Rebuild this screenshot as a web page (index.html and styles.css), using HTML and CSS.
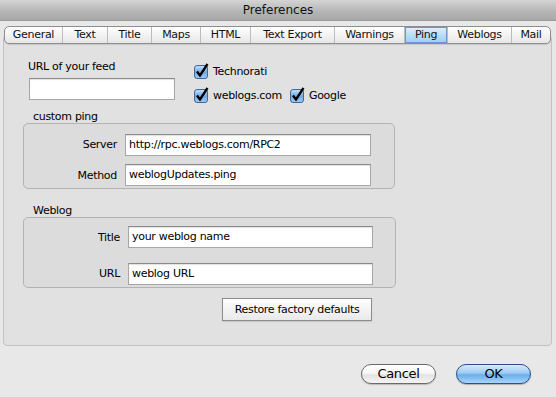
FILE: index.html
```html
<!DOCTYPE html>
<html>
<head>
<meta charset="utf-8">
<link rel="stylesheet" href="styles.css">
</head>
<body>
<div class="window">
  <div class="titlebar">Preferences</div>
  <div class="tabs">
    <div class="tab w-general">General</div>
    <div class="tab w-text">Text</div>
    <div class="tab w-title">Title</div>
    <div class="tab w-maps">Maps</div>
    <div class="tab w-html">HTML</div>
    <div class="tab w-export">Text Export</div>
    <div class="tab w-warn">Warnings</div>
    <div class="tab w-ping selected">Ping</div>
    <div class="tab w-weblogs">Weblogs</div>
    <div class="tab w-mail last">Mail</div>
  </div>
  <div class="panel">
    <div class="top">
      <div class="feed">
        <div class="label">URL of your feed</div>
        <div class="input feed-input"></div>
      </div>
      <div class="checks">
        <div class="check-row">
          <label class="check"><svg class="cb" viewBox="0 0 16 16" width="16" height="16"><defs><linearGradient id="g1" x1="0" y1="0" x2="0" y2="1"><stop offset="0" stop-color="#c9e2fb"/><stop offset="0.5" stop-color="#6fa9e6"/><stop offset="1" stop-color="#9fcaf5"/></linearGradient></defs><rect x="0.5" y="2.5" width="13" height="13" rx="2.5" fill="url(#g1)" stroke="#41679e"/><path d="M3 8.5 L6 12.5 L13.5 1" fill="none" stroke="#000" stroke-width="2.3" stroke-linejoin="miter"/></svg><span>Technorati</span></label>
        </div>
        <div class="check-row">
          <label class="check"><svg class="cb" viewBox="0 0 16 16" width="16" height="16"><rect x="0.5" y="2.5" width="13" height="13" rx="2.5" fill="url(#g1)" stroke="#41679e"/><path d="M3 8.5 L6 12.5 L13.5 1" fill="none" stroke="#000" stroke-width="2.3"/></svg><span>weblogs.com</span></label>
          <label class="check"><svg class="cb" viewBox="0 0 16 16" width="16" height="16"><rect x="0.5" y="2.5" width="13" height="13" rx="2.5" fill="url(#g1)" stroke="#41679e"/><path d="M3 8.5 L6 12.5 L13.5 1" fill="none" stroke="#000" stroke-width="2.3"/></svg><span>Google</span></label>
        </div>
      </div>
    </div>

    <div class="legend first">custom ping</div>
    <div class="group group-ping">
      <div class="lbl">Server</div><div class="input">http://rpc.weblogs.com/RPC2</div>
      <div class="lbl">Method</div><div class="input">weblogUpdates.ping</div>
    </div>

    <div class="legend second">Weblog</div>
    <div class="group group-weblog">
      <div class="lbl">Title</div><div class="input">your weblog name</div>
      <div class="lbl">URL</div><div class="input">weblog URL</div>
    </div>

    <div class="restore">Restore factory defaults</div>
  </div>
  <div class="buttons">
    <div class="pill cancel">Cancel</div>
    <div class="pill ok">OK</div>
  </div>
</div>
</body>
</html>
```

FILE: styles.css
```css
* { box-sizing: border-box; }
html, body { margin: 0; padding: 0; }
body {
  font-family: "DejaVu Sans", sans-serif;
  font-size: 11px;
  letter-spacing: -0.3px;
  color: #000;
  background: #e8e8e8;
}
.window {
  width: 556px;
  height: 397px;
  background: #e8e8e8;
  overflow: hidden;
}
.titlebar {
  height: 21px;
  line-height: 21px;
  text-align: center;
  font-size: 12px;
  letter-spacing: 0;
  color: #111;
  background: linear-gradient(#d4d4d4, #b4b4b4 60%, #a8a8a8);
  border-bottom: 1px solid #9a9a9a;
}
.tabs {
  position: relative;
  z-index: 2;
  display: flex;
  margin: 5px 0 0 4px;
  height: 18px;
  width: 547px;
  border: 1px solid #8e8e8e;
  border-radius: 5px;
  background: linear-gradient(#ffffff, #f3f3f3 50%, #e6e6e6);
  box-shadow: 0 1px 1px rgba(0,0,0,0.12);
  overflow: hidden;
}
.tab {
  height: 16px;
  line-height: 16px;
  text-align: center;
  border-right: 1px solid #bcbcbc;
  color: #111;
}
.tab.last { border-right: none; }
.tab.selected {
  background: linear-gradient(#e2f1fe, #b8dcf9 50%, #9ccef6);
  box-shadow: inset 0 0 0 1px #6f95cc;
}
.w-general { width: 58px; }
.w-text { width: 45px; }
.w-title { width: 44px; }
.w-maps { width: 49px; }
.w-html { width: 50px; }
.w-export { width: 84px; }
.w-warn { width: 70px; }
.w-ping { width: 43px; }
.w-weblogs { width: 64px; }
.w-mail { width: 38px; }

.panel {
  margin: -9px 0 0 3px;
  width: 549px;
  height: 311px;
  background: #e1e1e1;
  border: 1px solid #c2c2c2;
  border-radius: 4px;
  padding: 24px 0 0 0;
}
.top {
  display: flex;
  margin-left: 24px;
  height: 40px;
}
.feed { width: 166px; }
.label { line-height: 14px; height: 14px; }
.input {
  height: 22px;
  background: #fff;
  border: 1px solid #a6a6a6;
  border-top-color: #8a8a8a;
  box-shadow: inset 0 1px 1px rgba(0,0,0,0.12);
  line-height: 20px;
  padding-left: 3px;
  white-space: nowrap;
  overflow: hidden;
}
.feed-input {
  margin: 4px 0 0 1px;
  width: 146px;
}
.checks { padding-top: 3px; }
.check-row {
  display: flex;
  gap: 8px;
  height: 16px;
  margin-bottom: 8px;
}
.check {
  display: flex;
  align-items: center;
  gap: 3px;
  height: 16px;
}
.cb { display: block; }
.check span { line-height: 16px; position: relative; top: 1px; }

.legend {
  line-height: 13px;
  height: 13px;
  margin-left: 29px;
}
.legend.first { margin-top: 10px; }
.legend.second { margin-top: 15px; }
.group {
  margin-left: 19px;
  background: #dcdcdc;
  border: 1px solid #b3b3b3;
  border-radius: 5px;
  display: grid;
  align-items: center;
  column-gap: 8px;
}
.lbl { text-align: right; }
.group-ping {
  width: 372px;
  height: 66px;
  grid-template-columns: 93px 246px;
  row-gap: 5px;
  padding-top: 8px;
}
.group-weblog {
  width: 373px;
  height: 71px;
  grid-template-columns: 96px 245px;
  row-gap: 10px;
  padding-top: 6px;
}
.restore {
  margin: 10px 0 0 218px;
  width: 150px;
  height: 23px;
  line-height: 21px;
  text-align: center;
  border: 1px solid #8c8c8c;
  background: linear-gradient(#ffffff, #f4f4f4 50%, #e9e9e9);
  box-shadow: 0 1px 1px rgba(0,0,0,0.1);
}
.buttons {
  display: flex;
  justify-content: flex-end;
  gap: 20px;
  padding-right: 25px;
  margin-top: 18px;
}
.pill {
  width: 75px;
  height: 20px;
  line-height: 18px;
  text-align: center;
  border-radius: 10px;
  font-size: 13px;
  letter-spacing: -0.3px;
}
.cancel {
  border: 1px solid #6a6a6a;
  background: linear-gradient(#ffffff, #f6f6f6 45%, #e3e3e3 55%, #f4f4f4);
  box-shadow: 0 1px 1px rgba(0,0,0,0.2);
}
.ok {
  border: 1px solid #2f4f8c;
  background: linear-gradient(#d6eafc, #9ccaf3 45%, #6aaeea 55%, #a8d6fb);
  box-shadow: 0 1px 1px rgba(0,0,0,0.25);
}
```
